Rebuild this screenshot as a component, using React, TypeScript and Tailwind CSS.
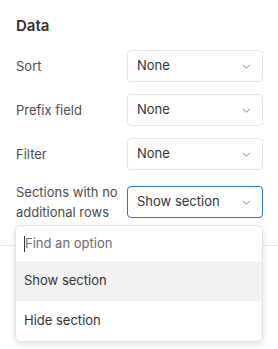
import React from 'react';

const Chevron: React.FC = () => (
  <svg className="w-[9px] h-[9px] text-[#777]" viewBox="0 0 10 10" fill="none" stroke="currentColor">
    <path d="M1.5 3.5L5 7l3.5-3.5" strokeWidth={1} strokeLinecap="round" strokeLinejoin="round" />
  </svg>
);

interface RowProps {
  label: React.ReactNode;
  value: string;
  active?: boolean;
}

const Row: React.FC<RowProps> = ({ label, value, active }) => (
  <div className="flex items-center">
    <div className="flex-1 text-[13px] leading-[20px] text-[#4d4d4d]">{label}</div>
    <div
      className={`w-[136px] h-[32px] flex items-center justify-between pl-[9px] pr-[11px] rounded-[4px] bg-white text-[13px] text-[#333] ${
        active ? 'border-[1.5px] border-[#2d6fd6]' : 'border border-[#e4e4e4]'
      }`}
    >
      <span>{value}</span>
      <Chevron />
    </div>
  </div>
);

const App: React.FC = () => {
  return (
    <div className="relative h-[349px] w-[278px] overflow-hidden bg-white" style={{ fontFamily: 'Inter, "Noto Sans", sans-serif' }}>
      <div className="pl-4 pr-[15px] pt-[14px]">
        <h2 className="text-[15px] leading-[24px] font-semibold text-[#333]">Data</h2>
        <div className="mt-[12px] flex flex-col gap-3">
          <Row label="Sort" value="None" />
          <Row label="Prefix field" value="None" />
          <Row label="Filter" value="None" />
          <Row label={<>Sections with no<br />additional rows</>} value="Show section" active />
        </div>
      </div>
      <div className="mt-[23px] border-t border-[#e6e6e6]" />

      <div className="absolute left-[15px] top-[225px] w-[248px] rounded-[6px] border border-[#e2e2e2] bg-white shadow-[0_2px_6px_rgba(0,0,0,0.12)] overflow-hidden">
        <div className="h-[35px] flex items-center px-2">
          <span className="w-px h-[16px] bg-[#333]" />
          <input
            className="w-full outline-none text-[13px] text-[#333] placeholder:text-[#6b6b6b]"
            placeholder="Find an option"
          />
        </div>
        <div className="h-[40px] flex items-center px-2 bg-[#f2f2f2] text-[13px] text-[#333]">Show section</div>
        <div className="h-[40px] flex items-center px-2 text-[13px] text-[#333]">Hide section</div>
      </div>
    </div>
  );
};

export default App;
